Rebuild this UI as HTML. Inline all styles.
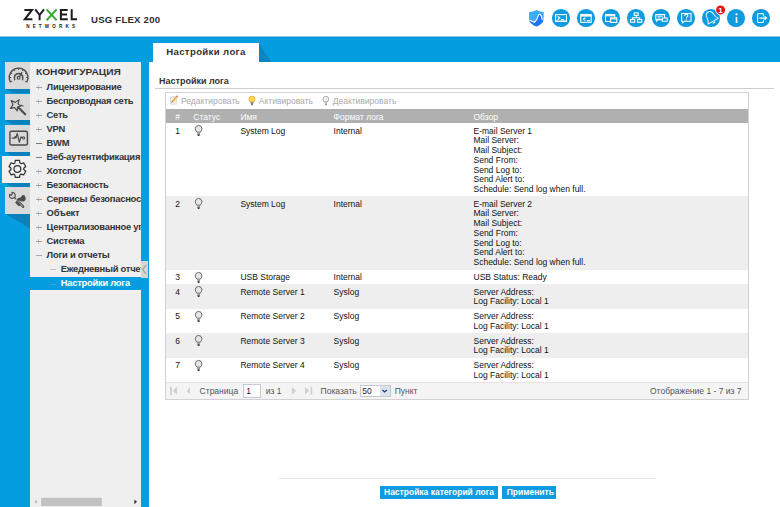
<!DOCTYPE html>
<html><head><meta charset="utf-8">
<style>
*{margin:0;padding:0;box-sizing:border-box}
html,body{width:780px;height:507px;overflow:hidden;background:#fff;font-family:"Liberation Sans",sans-serif;position:relative}
.a{position:absolute}
.t{position:absolute;white-space:nowrap;font-size:8.5px;line-height:9.8px;color:#111}
.mi{position:absolute;white-space:nowrap;font-size:9.4px;letter-spacing:-0.25px;font-weight:bold;color:#333;line-height:14px}
.pm{position:absolute;font-size:9px;color:#8a8a8a;line-height:14px}
.itab{position:absolute;left:5px;width:25px;height:27px;background:#d9d9d9}
.circ{position:absolute;top:9.2px;width:17.5px;height:17.5px;border-radius:50%;background:#0e9be0}
.circ svg{position:absolute;left:0;top:0;width:17.5px;height:17.5px}
</style></head><body>
<div class="a" style="left:0;top:36px;width:780px;height:471px;background:#049ddf"></div>
<div class="a" style="left:0;top:36px;width:780px;height:1px;background:#8ccdee"></div>
<div class="a" style="left:0;top:37px;width:780px;height:1px;background:#0290d4"></div>
<div class="a" style="left:149px;top:62px;width:631px;height:445px;background:#fff"></div>
<div class="a" style="left:153px;top:43px;width:106px;height:19px;background:#fff"></div>
<div class="a" style="left:259px;top:43px;width:0;height:0;border-bottom:19px solid #0b86c0;border-right:12px solid transparent"></div>
<div class="t" style="left:166.2px;top:45.3px;font-size:9.6px;letter-spacing:0.36px;line-height:14px;font-weight:bold;color:#333">Настройки лога</div>
<svg class="a" style="left:0;top:0" width="200" height="36" viewBox="0 0 200 36">
<g fill="none" stroke="#1c1c1c" stroke-width="2" stroke-linejoin="miter">
<path d="M24.4 9.9 H32 L24.8 19.3 H32.4"/>
<path d="M35.2 9.4 L39.6 15 L44 9.4 M39.6 15 V20.2"/>
<path d="M67.7 9.9 H60.9 V19.3 H67.8 M60.9 14.6 H67"/>
<path d="M71.7 9.2 V19.3 H77"/>
</g>
<path d="M46.6 9.4 L56.6 20.2 M56.6 9.4 L46.6 20.2" fill="none" stroke="#3aaa35" stroke-width="2"/>
<text x="26.2" y="27.6" font-family="Liberation Sans" font-weight="bold" font-size="4.6" fill="#1c1c1c" textLength="48.8" lengthAdjust="spacing">NETWORKS</text>
</svg>
<div class="t" style="left:91px;top:13.1px;font-size:9.6px;line-height:13px;font-weight:bold;color:#2b2b3b;letter-spacing:0.22px;transform-origin:0 0">USG FLEX 200</div>
<div class="circ" style="left:552.25px"></div>
<div class="circ" style="left:577.25px"></div>
<div class="circ" style="left:602.25px"></div>
<div class="circ" style="left:627.25px"></div>
<div class="circ" style="left:652.25px"></div>
<div class="circ" style="left:677.25px"></div>
<div class="circ" style="left:702.25px"></div>
<div class="circ" style="left:727.25px"></div>
<div class="circ" style="left:752.25px"></div>
<div class="itab" style="top:62px;height:26.5px"></div>
<div class="a" style="left:5px;top:88.5px;width:25px;height:4.5px;background:#0b80bb;clip-path:polygon(0 0,100% 0,100% 100%,30% 100%)"></div>
<div class="itab" style="top:93.5px;height:26.5px"></div>
<div class="a" style="left:5px;top:120.0px;width:25px;height:4.5px;background:#0b80bb;clip-path:polygon(0 0,100% 0,100% 100%,30% 100%)"></div>
<div class="itab" style="top:125px;height:26.5px"></div>
<div class="a" style="left:5px;top:151.5px;width:25px;height:4.5px;background:#0b80bb;clip-path:polygon(0 0,100% 0,100% 100%,30% 100%)"></div>
<div class="a" style="left:2px;top:156px;width:28px;height:26.5px;background:#f0f0f0"></div>
<div class="a" style="left:5px;top:182.5px;width:25px;height:4.5px;background:#0b80bb;clip-path:polygon(0 0,100% 0,100% 100%,30% 100%)"></div>
<div class="itab" style="top:187px;height:26.5px"></div>
<div class="a" style="left:5px;top:213.5px;width:25px;height:15px;background:#0b80bb;clip-path:polygon(0 0,100% 0,100% 100%)"></div>
<div class="a" style="left:30px;top:62px;width:111px;height:214.5px;background:#efefef;overflow:hidden"><div class="mi" style="left:5.8px;top:2.9px;font-size:9.6px;letter-spacing:0;transform:scaleX(1.06);transform-origin:0 0">КОНФИГУРАЦИЯ</div><div class="a" style="left:6px;top:25px;width:6px;height:1px;background:#a0a0a0"></div><div class="a" style="left:8px;top:23px;width:1px;height:5px;background:#c8c8c8"></div><div class="a" style="left:6px;top:25px;width:6px;height:1px;background:#a0a0a0"></div><div class="mi" style="left:16.6px;top:18.3px">Лицензирование</div><div class="a" style="left:6px;top:39px;width:6px;height:1px;background:#a0a0a0"></div><div class="a" style="left:8px;top:37px;width:1px;height:5px;background:#c8c8c8"></div><div class="a" style="left:6px;top:39px;width:6px;height:1px;background:#a0a0a0"></div><div class="mi" style="left:16.6px;top:32.3px">Беспроводная сеть</div><div class="a" style="left:6px;top:53px;width:6px;height:1px;background:#a0a0a0"></div><div class="a" style="left:8px;top:51px;width:1px;height:5px;background:#c8c8c8"></div><div class="a" style="left:6px;top:53px;width:6px;height:1px;background:#a0a0a0"></div><div class="mi" style="left:16.6px;top:46.3px">Сеть</div><div class="a" style="left:6px;top:67px;width:6px;height:1px;background:#a0a0a0"></div><div class="a" style="left:8px;top:65px;width:1px;height:5px;background:#c8c8c8"></div><div class="a" style="left:6px;top:67px;width:6px;height:1px;background:#a0a0a0"></div><div class="mi" style="left:16.6px;top:60.3px">VPN</div><div class="a" style="left:6px;top:81px;width:6px;height:1px;background:#7a7a7a"></div><div class="mi" style="left:16.6px;top:74.3px">BWM</div><div class="a" style="left:6px;top:95px;width:6px;height:1px;background:#7a7a7a"></div><div class="mi" style="left:16.6px;top:88.3px">Веб-аутентификация</div><div class="a" style="left:6px;top:109px;width:6px;height:1px;background:#a0a0a0"></div><div class="a" style="left:8px;top:107px;width:1px;height:5px;background:#c8c8c8"></div><div class="a" style="left:6px;top:109px;width:6px;height:1px;background:#a0a0a0"></div><div class="mi" style="left:16.6px;top:102.3px">Хотспот</div><div class="a" style="left:6px;top:123px;width:6px;height:1px;background:#a0a0a0"></div><div class="a" style="left:8px;top:121px;width:1px;height:5px;background:#c8c8c8"></div><div class="a" style="left:6px;top:123px;width:6px;height:1px;background:#a0a0a0"></div><div class="mi" style="left:16.6px;top:116.3px">Безопасность</div><div class="a" style="left:6px;top:137px;width:6px;height:1px;background:#a0a0a0"></div><div class="a" style="left:8px;top:135px;width:1px;height:5px;background:#c8c8c8"></div><div class="a" style="left:6px;top:137px;width:6px;height:1px;background:#a0a0a0"></div><div class="mi" style="left:16.6px;top:130.3px">Сервисы безопасности</div><div class="a" style="left:6px;top:151px;width:6px;height:1px;background:#a0a0a0"></div><div class="a" style="left:8px;top:149px;width:1px;height:5px;background:#c8c8c8"></div><div class="a" style="left:6px;top:151px;width:6px;height:1px;background:#a0a0a0"></div><div class="mi" style="left:16.6px;top:144.3px">Объект</div><div class="a" style="left:6px;top:165px;width:6px;height:1px;background:#a0a0a0"></div><div class="a" style="left:8px;top:163px;width:1px;height:5px;background:#c8c8c8"></div><div class="a" style="left:6px;top:165px;width:6px;height:1px;background:#a0a0a0"></div><div class="mi" style="left:16.6px;top:158.3px">Централизованное управление</div><div class="a" style="left:6px;top:179px;width:6px;height:1px;background:#a0a0a0"></div><div class="a" style="left:8px;top:177px;width:1px;height:5px;background:#c8c8c8"></div><div class="a" style="left:6px;top:179px;width:6px;height:1px;background:#a0a0a0"></div><div class="mi" style="left:16.6px;top:172.3px">Система</div><div class="a" style="left:6px;top:193px;width:6px;height:1px;background:#a8a8a8"></div><div class="mi" style="left:16.6px;top:186.3px">Логи и отчеты</div><div class="a" style="left:20px;top:207px;width:6px;height:1px;background:#c4c4c4"></div><div class="mi" style="left:30.7px;top:200.3px">Ежедневный отчет</div></div>
<div class="a" style="left:30px;top:290px;width:111px;height:217px;background:#efefef"></div>
<div class="a" style="left:50px;top:284px;width:6px;height:1px;background:#4a9fcf"></div>
<div class="mi" style="left:60.7px;top:276px;color:#fff">Настройки лога</div>
<div class="a" style="left:141px;top:261px;width:6.5px;height:17px;background:#d5d5d5"></div>
<div class="t" style="left:159px;top:76px;font-size:9px;line-height:10px;font-weight:bold;color:#333">Настройки лога</div>
<div class="a" style="left:155px;top:88px;width:619px;height:1px;background:#cfcfcf"></div>
<div class="a" style="left:165px;top:92px;width:584px;height:308px;border:1px solid #d2d2d2;background:#fff"></div>
<div class="a" style="left:166px;top:109px;width:582px;height:14px;background:#b0b0b0"></div>
<div class="t" style="left:181px;top:96.7px;color:#aaa">Редактировать</div>
<div class="t" style="left:258.8px;top:96.7px;color:#aaa">Активировать</div>
<div class="t" style="left:332.7px;top:96.7px;color:#aaa">Деактивировать</div>
<div class="t" style="left:175.2px;top:112.5px;color:#fff">#</div>
<div class="t" style="left:193.3px;top:112.5px;color:#fff">Статус</div>
<div class="t" style="left:240.4px;top:112.5px;color:#fff">Имя</div>
<div class="t" style="left:333.6px;top:112.5px;color:#fff">Формат лога</div>
<div class="t" style="left:473.5px;top:112.5px;color:#fff">Обзор</div>
<div class="a" style="left:166px;top:123px;width:582px;height:73px;background:#fff"></div>
<div class="t" style="left:175.2px;top:126.5px">1</div>
<div class="t" style="left:240.4px;top:126.5px">System Log</div>
<div class="t" style="left:333.6px;top:126.5px">Internal</div>
<div class="t" style="left:473.5px;top:126.5px">E-mail Server 1<br>Mail Server:<br>Mail Subject:<br>Send From:<br>Send Log to:<br>Send Alert to:<br>Schedule: Send log when full.</div>
<div class="a" style="left:166px;top:196px;width:582px;height:74px;background:#eeeeee"></div>
<div class="t" style="left:175.2px;top:199.5px">2</div>
<div class="t" style="left:240.4px;top:199.5px">System Log</div>
<div class="t" style="left:333.6px;top:199.5px">Internal</div>
<div class="t" style="left:473.5px;top:199.5px">E-mail Server 2<br>Mail Server:<br>Mail Subject:<br>Send From:<br>Send Log to:<br>Send Alert to:<br>Schedule: Send log when full.</div>
<div class="a" style="left:166px;top:270px;width:582px;height:14px;background:#fff"></div>
<div class="t" style="left:175.2px;top:273.0px">3</div>
<div class="t" style="left:240.4px;top:273.0px">USB Storage</div>
<div class="t" style="left:333.6px;top:273.0px">Internal</div>
<div class="t" style="left:473.5px;top:273.0px">USB Status: Ready</div>
<div class="a" style="left:166px;top:284px;width:582px;height:25px;background:#eeeeee"></div>
<div class="t" style="left:175.2px;top:287.5px">4</div>
<div class="t" style="left:240.4px;top:287.5px">Remote Server 1</div>
<div class="t" style="left:333.6px;top:287.5px">Syslog</div>
<div class="t" style="left:473.5px;top:287.5px">Server Address:<br>Log Facility: Local 1</div>
<div class="a" style="left:166px;top:309px;width:582px;height:24px;background:#fff"></div>
<div class="t" style="left:175.2px;top:312.0px">5</div>
<div class="t" style="left:240.4px;top:312.0px">Remote Server 2</div>
<div class="t" style="left:333.6px;top:312.0px">Syslog</div>
<div class="t" style="left:473.5px;top:312.0px">Server Address:<br>Log Facility: Local 1</div>
<div class="a" style="left:166px;top:333px;width:582px;height:25px;background:#eeeeee"></div>
<div class="t" style="left:175.2px;top:336.5px">6</div>
<div class="t" style="left:240.4px;top:336.5px">Remote Server 3</div>
<div class="t" style="left:333.6px;top:336.5px">Syslog</div>
<div class="t" style="left:473.5px;top:336.5px">Server Address:<br>Log Facility: Local 1</div>
<div class="a" style="left:166px;top:358px;width:582px;height:24px;background:#fff"></div>
<div class="t" style="left:175.2px;top:361.0px">7</div>
<div class="t" style="left:240.4px;top:361.0px">Remote Server 4</div>
<div class="t" style="left:333.6px;top:361.0px">Syslog</div>
<div class="t" style="left:473.5px;top:361.0px">Server Address:<br>Log Facility: Local 1</div>
<div class="a" style="left:166px;top:382px;width:582px;height:17px;background:#f4f4f4;border-top:1px solid #e4e4e4"></div>
<div class="t" style="left:199.6px;top:387px;color:#555">Страница</div>
<div class="a" style="left:242.7px;top:384px;width:18px;height:13.5px;background:#fff;border:1px solid #c5c8d5"></div>
<div class="t" style="left:246.3px;top:387px;color:#222">1</div>
<div class="t" style="left:265.8px;top:387px;color:#555">из 1</div>
<div class="t" style="left:320.6px;top:387px;color:#555">Показать</div>
<div class="a" style="left:360px;top:385.2px;width:30.5px;height:11.5px;background:#fff;border:1px solid #c5c8d5"></div>
<div class="a" style="left:380px;top:386.2px;width:9.5px;height:9.5px;background:#dde3ea"></div>
<div class="t" style="left:362.2px;top:387px;color:#222">50</div>
<div class="t" style="left:394.7px;top:387px;color:#555">Пункт</div>
<div class="t" style="left:650px;top:387px;color:#555">Отображение 1 - 7 из 7</div>
<div class="a" style="left:279px;top:478px;width:377px;height:1px;background:repeating-linear-gradient(90deg,#e0e0e0 0 3px,#f6f6f6 3px 4px)"></div>
<div class="a" style="left:379.5px;top:485.8px;width:118.5px;height:13.2px;background:#0e9be0"></div>
<div class="t" style="left:384px;top:487.5px;font-weight:bold;color:#fff">Настройка категорий лога</div>
<div class="a" style="left:502px;top:486px;width:54px;height:13px;background:#0e9be0"></div>
<div class="t" style="left:506.7px;top:487.5px;font-weight:bold;color:#fff">Применить</div>

<svg class="a" style="left:0;top:0" width="780" height="507" viewBox="0 0 780 507">
<defs><linearGradient id="sg" x1="0" y1="0" x2="0" y2="1"><stop offset="0" stop-color="#4fb3f6"/><stop offset="0.55" stop-color="#2f8ff0"/><stop offset="1" stop-color="#1565e6"/></linearGradient></defs>
<!-- shield -->
<path d="M529 12.2 Q533 11.8 536.4 9.9 Q540 11.8 543.8 12.1 L543.6 19 Q542.8 24 536.4 26.6 Q530 24 529.2 19.5 Z" fill="#3fabf5"/>
<path d="M529.4 20.6 L534.4 22.6 L537.2 19.6 L538.2 16.6 Q539.6 13.6 541 16.6 L542.6 20.2 L543.4 20.6 Q542.6 24 536.4 26.6 Q530.5 24 529.4 20.6 Z" fill="#1f72f2"/>
<path d="M529.8 20.3 L534.3 22.3 L536.9 19.5 L537.9 16.6 Q538.4 14.3 539.6 14.2 Q540.9 14.3 541.3 16.4 L542.4 19.9" fill="none" stroke="#fff" stroke-width="1.05"/>
<g fill="none" stroke="#fff" stroke-width="1.1">
<!-- console -->
<rect x="555.6" y="14.6" width="10.9" height="6.8"/>
<path d="M555.6 21.2 H566.5" stroke-width="1.3"/>
<path d="M557.6 16.2 L559.9 17.9 L557.6 19.6 M561 19.6 H564"/>
<!-- web console -->
<rect x="580.7" y="14.5" width="10.5" height="7.8"/>
<path d="M580.7 15.6 H591.2" stroke-width="2"/>
<path d="M585.4 17.6 L583.3 19.1 L585.4 20.6 M587 20.6 H589.8"/>
<!-- windows -->
<rect x="605.5" y="14.5" width="9.2" height="7"/>
<path d="M605.5 15.7 H614.7" stroke-width="1.2"/>
<rect x="610.6" y="17.9" width="6.2" height="4.5" fill="#0e9be0"/>
<path d="M610.6 18.9 H616.8" stroke-width="1"/>
<!-- sitemap -->
<rect x="634.2" y="12.9" width="4" height="2.5"/>
<path d="M636.2 15.4 V17.8 M632.6 19.3 V17.8 H639.6 V19.3"/>
<rect x="630.5" y="19.4" width="4.2" height="2.8"/>
<rect x="637.5" y="19.4" width="4.2" height="2.8"/>
<!-- chat -->
<path d="M655.8 14.6 H664.6 V19.6 H658 L656.6 21 V19.6 H655.8 Z"/>
<path d="M657.5 16.3 H662.5 M657.5 18 H660.5" stroke-width="0.9"/>
<path d="M662.3 18 H667.2 V21.3 H662.3 Z" fill="#0e9be0"/>
<!-- help -->
<path d="M681.6 13.5 H691 V21.2 H684.4 L682.6 22.8 V21.2 H681.6 Z"/>
<!-- bell -->
<g transform="translate(711.1 17.4) rotate(-30) scale(1.2)" stroke-width="0.75" stroke-linejoin="round">
<path d="M0 -5.2 C-2.6 -5.2 -3.2 -3 -3.2 -0.6 C-3.2 1.6 -4 2.6 -5 3.6 L5 3.6 C4 2.6 3.2 1.6 3.2 -0.6 C3.2 -3 2.6 -5.2 0 -5.2 Z"/>
<path d="M-1.1 4.5 Q0 5.7 1.1 4.5" stroke-width="0.9"/>
</g>
<!-- logout -->
<path d="M763.4 16.4 V13.7 H757.7 V22.5 H763.4 V19.8" stroke-width="1" stroke-linejoin="round"/>
<path d="M759.4 18.1 H766.4 M764.6 16.2 L766.6 18.1 L764.6 20" stroke-width="1.05"/>
</g>
<path d="M684.7 15.9 Q684.7 14.3 686.3 14.3 Q687.9 14.3 687.9 15.7 Q687.9 16.6 686.9 17.1 Q686.3 17.5 686.3 18.6" fill="none" stroke="#fff" stroke-width="1.1"/><circle cx="686.3" cy="20" r="0.65" fill="#fff"/>
<!-- info -->
<circle cx="736.5" cy="14.3" r="1.1" fill="#fff"/>
<rect x="735.7" y="16.9" width="1.65" height="6.1" fill="#fff"/>
<!-- badge -->
<circle cx="720.6" cy="9.9" r="5.2" fill="#fff"/>
<circle cx="720.6" cy="9.9" r="4.5" fill="#ee1111"/>
<text x="720.6" y="12.9" font-family="Liberation Sans" font-size="8" font-weight="bold" fill="#fff" text-anchor="middle">1</text>

<!-- tab icons -->
<g fill="none" stroke="#4a4a4a" stroke-width="1.3" stroke-linecap="round">
<path d="M10.5 82.3 A9.4 9.4 0 1 1 26.7 82.3" stroke-width="1.4" stroke-linecap="butt"/><path d="M10.98 81.90 L12.19 81.20 M9.80 77.50 L11.20 77.50 M10.98 73.10 L12.19 73.80 M14.20 69.88 L14.90 71.09 M18.60 68.70 L18.60 70.10 M23.00 69.88 L22.30 71.09 M26.22 73.10 L25.01 73.80 M27.40 77.50 L26.00 77.50 M26.22 81.90 L25.01 81.20 " stroke-width="0.9" stroke-linecap="butt"/>
<path d="M14.7 79.6 A4.3 4.3 0 1 1 22.5 79.6" stroke-width="1.5"/>
<circle cx="18.6" cy="77.8" r="1.45" stroke-width="1.2"/>
<path d="M19.6 76.4 L21.9 72.4" stroke-width="1.2"/>
<!-- wand -->
<path d="M19.10 99.60 L15.35 102.39 L11.20 100.60 L12.96 104.81 L10.40 108.40 L14.61 107.67 L17.20 111.00 L17.53 107.02 L21.00 106.00 L18.05 103.88 Z" stroke-width="1.15" stroke-linejoin="round" fill="#d9d9d9"/>
<path d="M18.2 107.2 L25.2 114.2" stroke-width="2.1"/>
<path d="M21.2 105.2 L23 106" stroke-width="1.1"/>

<!-- monitor -->
<rect x="9.9" y="131.2" width="17.5" height="13.8" rx="1.6" stroke-width="1.4"/>
<path d="M12.2 138.1 H14.4 L15.2 136.6 L15.9 138 L17.3 133.4 L19.3 142.2 L21 136.9 L22.4 137.7" stroke-width="1.2" stroke-linejoin="round"/>
<circle cx="23.5" cy="137.9" r="1.05" stroke-width="1.05"/>
<!-- gear -->
<path d="M14.80 163.05 L15.30 160.46 L19.50 160.46 L20.00 163.05 L21.16 163.72 L23.66 162.86 L25.76 166.50 L23.76 168.23 L23.76 169.57 L25.76 171.30 L23.66 174.94 L21.16 174.08 L20.00 174.75 L19.50 177.34 L15.30 177.34 L14.80 174.75 L13.64 174.08 L11.14 174.94 L9.04 171.30 L11.04 169.57 L11.04 168.23 L9.04 166.50 L11.14 162.86 L13.64 163.72 Z" stroke="#333" stroke-width="1.25" stroke-linejoin="round"/>
<circle cx="17.4" cy="168.9" r="3.4" stroke="#333" stroke-width="1.25"/>
<!-- wrench -->
</g>
<g fill="none" stroke="#4a4a4a" stroke-linejoin="round">
<path d="M9.6 194.3 L11.3 195.3 L12.3 194.1 L11.9 192.3 Q14.6 192.4 15.2 195 Q15.6 197.6 13.2 198.3 Q10.8 198.8 9.8 197 Q9.3 195.8 9.6 194.3 Z" stroke-width="1.1"/>
<path d="M14.8 197.9 L16.2 199.4" stroke-width="1.1"/>
<path d="M17.2 199.6 L23.7 206.1 Q24.1 207.5 22.8 207.5 L16.2 200.9" stroke-width="1.05"/>
<path d="M15.9 201.7 L19.8 205.6" stroke-width="2.3"/>
</g>
<path d="M16.6 199.6 Q18.4 197.6 21 197.2 L22.2 195.2 Q23.5 194.6 24.7 195.6 L25.8 198.6 Q25.6 200.9 23.6 201.5 L21.4 201.4 Q19.7 200.2 17.6 200.6 Z" fill="#4a4a4a"/>

<!-- collapse chevron -->
<path d="M146.3 264.8 L142.6 269.5 L146.3 274.2" fill="none" stroke="#7a7a7a" stroke-width="0.8"/>
<!-- scrollbar -->
<rect x="41.1" y="497.8" width="60.7" height="8.2" fill="#c2c2c2"/>
<path d="M36.8 499.6 L34.4 501.8 L36.8 504 Z" fill="#b8b8b8"/>
<path d="M134.3 499.4 L137 501.8 L134.3 504.2 Z" fill="#333"/>
<!-- toolbar icons -->
<rect x="170.2" y="96.3" width="6.6" height="8.3" fill="#d6d6d6"/>
<rect x="171.2" y="97.6" width="4.6" height="6" fill="#f2f2f2"/>
<path d="M172.2 101.8 L176.8 96.6" stroke="#f2b233" stroke-width="1.8"/>
<path d="M176.5 96.9 L177.6 95.8" stroke="#e86a9a" stroke-width="1.6"/>
<path d="M171.6 102.4 L172.6 101.3" stroke="#555" stroke-width="1"/>
<circle cx="252" cy="99.2" r="3.1" fill="#fcd94a" stroke="#f0a040" stroke-width="0.7"/>
<rect x="250.7" y="101.8" width="2.6" height="2.6" fill="#8a8a8a"/>
<rect x="251.2" y="104.2" width="1.6" height="1" fill="#555"/>
<circle cx="325.9" cy="99.2" r="2.9" fill="#f0f0f0" stroke="#9a9a9a" stroke-width="0.8"/>
<rect x="324.7" y="101.8" width="2.4" height="2.6" fill="#bdbdbd"/>
<rect x="325.1" y="104.2" width="1.6" height="1" fill="#777"/>
<path d="M196.9 132.2 Q195.2 130.4 195.3 128.5 Q195.6 125.5 198.6 125.4 Q201.6 125.5 201.9 128.5 Q202 130.4 200.3 132.2 Z" fill="#e6e6e6" stroke="#5a5a5a" stroke-width="0.9"/><rect x="197.3" y="132.4" width="2.6" height="1.8" fill="#9a9a9a"/><path d="M197.3 134.2 H199.9 L199.3 136.0 H197.9 Z" fill="#333"/><path d="M196.9 205.2 Q195.2 203.4 195.3 201.5 Q195.6 198.5 198.6 198.4 Q201.6 198.5 201.9 201.5 Q202 203.4 200.3 205.2 Z" fill="#e6e6e6" stroke="#5a5a5a" stroke-width="0.9"/><rect x="197.3" y="205.4" width="2.6" height="1.8" fill="#9a9a9a"/><path d="M197.3 207.2 H199.9 L199.3 209.0 H197.9 Z" fill="#333"/><path d="M196.9 279.2 Q195.2 277.4 195.3 275.5 Q195.6 272.5 198.6 272.4 Q201.6 272.5 201.9 275.5 Q202 277.4 200.3 279.2 Z" fill="#e6e6e6" stroke="#5a5a5a" stroke-width="0.9"/><rect x="197.3" y="279.4" width="2.6" height="1.8" fill="#9a9a9a"/><path d="M197.3 281.2 H199.9 L199.3 283.0 H197.9 Z" fill="#333"/><path d="M196.9 293.2 Q195.2 291.4 195.3 289.5 Q195.6 286.5 198.6 286.4 Q201.6 286.5 201.9 289.5 Q202 291.4 200.3 293.2 Z" fill="#e6e6e6" stroke="#5a5a5a" stroke-width="0.9"/><rect x="197.3" y="293.4" width="2.6" height="1.8" fill="#9a9a9a"/><path d="M197.3 295.2 H199.9 L199.3 297.0 H197.9 Z" fill="#333"/><path d="M196.9 318.2 Q195.2 316.4 195.3 314.5 Q195.6 311.5 198.6 311.4 Q201.6 311.5 201.9 314.5 Q202 316.4 200.3 318.2 Z" fill="#e6e6e6" stroke="#5a5a5a" stroke-width="0.9"/><rect x="197.3" y="318.4" width="2.6" height="1.8" fill="#9a9a9a"/><path d="M197.3 320.2 H199.9 L199.3 322.0 H197.9 Z" fill="#333"/><path d="M196.9 342.2 Q195.2 340.4 195.3 338.5 Q195.6 335.5 198.6 335.4 Q201.6 335.5 201.9 338.5 Q202 340.4 200.3 342.2 Z" fill="#e6e6e6" stroke="#5a5a5a" stroke-width="0.9"/><rect x="197.3" y="342.4" width="2.6" height="1.8" fill="#9a9a9a"/><path d="M197.3 344.2 H199.9 L199.3 346.0 H197.9 Z" fill="#333"/><path d="M196.9 367.2 Q195.2 365.4 195.3 363.5 Q195.6 360.5 198.6 360.4 Q201.6 360.5 201.9 363.5 Q202 365.4 200.3 367.2 Z" fill="#e6e6e6" stroke="#5a5a5a" stroke-width="0.9"/><rect x="197.3" y="367.4" width="2.6" height="1.8" fill="#9a9a9a"/><path d="M197.3 369.2 H199.9 L199.3 371.0 H197.9 Z" fill="#333"/>
<rect x="170" y="386.8" width="2" height="7.9" fill="#d0d0d0"/>
<path d="M177 386.8 L172.9 390.75 L177 394.7 Z" fill="#d0d0d0"/>
<path d="M190 387.6 L186.6 390.9 L190 394.2 Z" fill="#d0d0d0"/>
<path d="M291.8 387 L296.2 390.85 L291.8 394.7 Z" fill="#d0d0d0"/>
<path d="M305 387 L309.3 390.85 L305 394.7 Z" fill="#d0d0d0"/>
<rect x="310.6" y="386.8" width="1.6" height="7.9" fill="#d0d0d0"/>
<path d="M382.4 390 L384.6 392 L386.8 390" fill="none" stroke="#1f3c78" stroke-width="1.2"/>
</svg>
</body></html>
